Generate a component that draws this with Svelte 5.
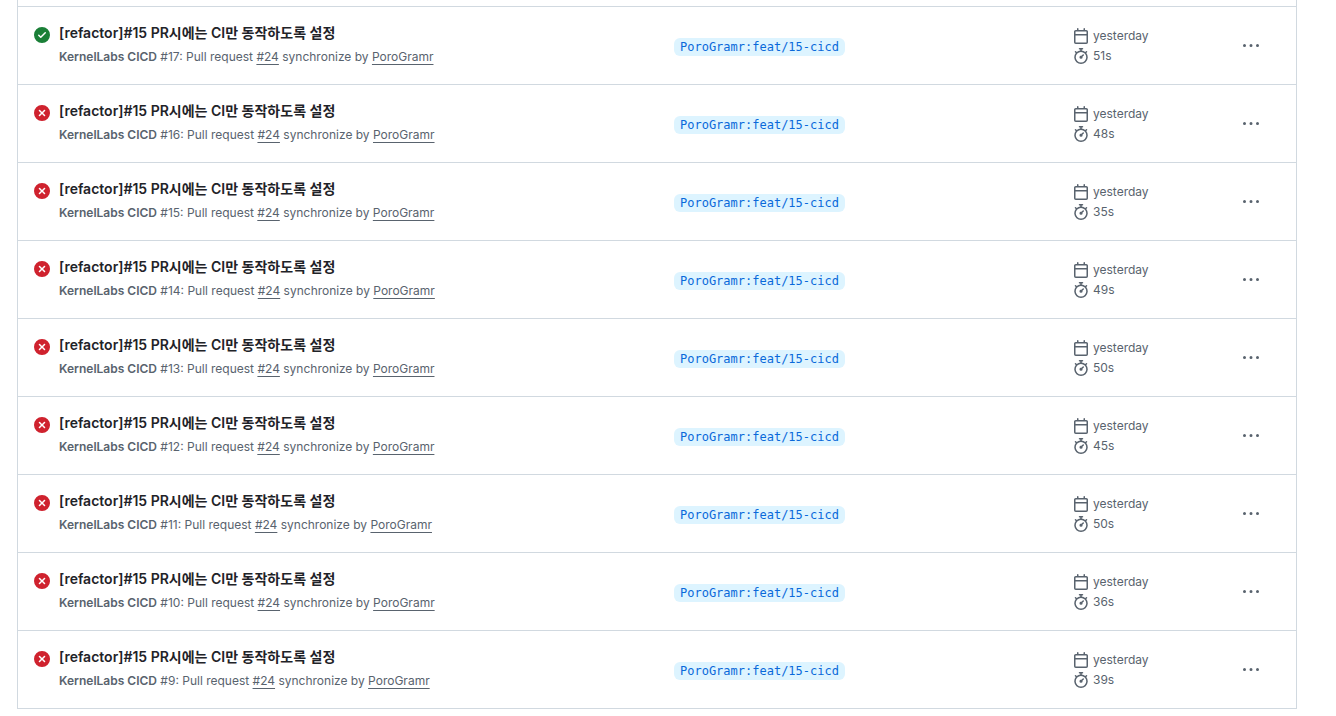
<script lang="ts">
  const runs = [
    { ok: true, num: 17, time: "51s" },
    { ok: false, num: 16, time: "48s" },
    { ok: false, num: 15, time: "35s" },
    { ok: false, num: 14, time: "49s" },
    { ok: false, num: 13, time: "50s" },
    { ok: false, num: 12, time: "45s" },
    { ok: false, num: 11, time: "50s" },
    { ok: false, num: 10, time: "36s" },
    { ok: false, num: 9, time: "39s" }
  ];
</script>

<div class="page">
  <div class="box">
    {#each runs as run}
      <div class="row">
        <div class="status">
          {#if run.ok}
            <svg width="16" height="16" viewBox="0 0 16 16" fill="#1a7f37">
              <path d="M8 16A8 8 0 1 1 8 0a8 8 0 0 1 0 16Zm3.78-9.72a.751.751 0 0 0-.018-1.042.751.751 0 0 0-1.042-.018L6.75 9.19 5.28 7.72a.751.751 0 0 0-1.042.018.751.751 0 0 0-.018 1.042l2 2a.75.75 0 0 0 1.06 0Z" />
            </svg>
          {:else}
            <svg width="16" height="16" viewBox="0 0 16 16" fill="#cf222e">
              <path d="M2.343 13.657A8 8 0 1 1 13.658 2.343 8 8 0 0 1 2.343 13.657ZM6.03 4.97a.751.751 0 0 0-1.042.018.751.751 0 0 0-.018 1.042L6.94 8 4.97 9.97a.749.749 0 0 0 .326 1.275.749.749 0 0 0 .734-.215L8 9.06l1.97 1.97a.749.749 0 0 0 1.275-.326.749.749 0 0 0-.215-.734L9.06 8l1.97-1.97a.749.749 0 0 0-.326-1.275.749.749 0 0 0-.734.215L8 6.94Z" />
            </svg>
          {/if}
        </div>
        <div class="info">
          <div class="title">[refactor]#15 PR시에는 CI만 동작하도록 설정</div>
          <div class="meta"><b>KernelLabs CICD</b> #{run.num}: Pull request <a href="#top">#24</a> synchronize by <a href="#top">PoroGramr</a></div>
        </div>
        <div class="branch"><span>PoroGramr:feat/15-cicd</span></div>
        <div class="times">
          <div class="when">
            <svg width="16" height="16" viewBox="0 0 16 16" fill="#59636e">
              <path d="M4.75 0a.75.75 0 0 1 .75.75V2h5V.75a.75.75 0 0 1 1.5 0V2h1.25c.966 0 1.75.784 1.75 1.75v10.5A1.75 1.75 0 0 1 13.25 16H2.75A1.75 1.75 0 0 1 1 14.25V3.75C1 2.784 1.784 2 2.75 2H4V.75A.75.75 0 0 1 4.75 0ZM2.5 7.5v6.75c0 .138.112.25.25.25h10.5a.25.25 0 0 0 .25-.25V7.5Zm10.75-4H2.75a.25.25 0 0 0-.25.25V6h11V3.75a.25.25 0 0 0-.25-.25Z" />
            </svg>
            yesterday
          </div>
          <div class="when">
            <svg width="16" height="16" viewBox="0 0 16 16" fill="#59636e">
              <path d="M5.75.75A.75.75 0 0 1 6.5 0h3a.75.75 0 0 1 0 1.5h-.75v1l-.001.041a6.724 6.724 0 0 1 3.464 1.435l.007-.006.75-.75a.751.751 0 0 1 1.042.018.751.751 0 0 1 .018 1.042l-.75.75-.006.007a6.75 6.75 0 1 1-10.548 0L2.72 5.03l-.75-.75a.751.751 0 0 1 .018-1.042.751.751 0 0 1 1.042-.018l.75.75.007.006A6.72 6.72 0 0 1 7.25 2.541V1.5H6.5a.75.75 0 0 1-.75-.75ZM8 14.5a5.25 5.25 0 1 0-.001-10.501A5.25 5.25 0 0 0 8 14.5Zm.389-6.7 1.33-1.33a.75.75 0 1 1 1.061 1.06L9.45 8.861A1.503 1.503 0 0 1 8 10.75a1.499 1.499 0 1 1 .389-2.95Z" />
            </svg>
            {run.time}
          </div>
        </div>
        <div class="more">
          <svg width="16" height="16" viewBox="0 0 16 16" fill="#59636e">
            <path d="M8 9a1.5 1.5 0 1 0 0-3 1.5 1.5 0 0 0 0 3ZM1.5 9a1.5 1.5 0 1 0 0-3 1.5 1.5 0 0 0 0 3Zm13 0a1.5 1.5 0 1 0 0-3 1.5 1.5 0 0 0 0 3Z" />
          </svg>
        </div>
      </div>
    {/each}
  </div>
</div>

<style>
  :global(body) {
    background: #fff;
    overflow: hidden;
  }

  .page {
    height: 716px;
    overflow: hidden;
    padding: 0 39px 0 17px;
    font-family: Inter, "Noto Sans CJK KR", sans-serif;
    color: #59636e;
  }

  .box {
    border-left: 1px solid #d1d9e0;
    border-right: 1px solid #d1d9e0;
    padding-top: 6px;
  }

  .row {
    height: 78px;
    box-sizing: border-box;
    border-top: 1px solid #d1d9e0;
    display: flex;
    align-items: center;
    padding: 0 19px 0 16px;
  }

  .row:last-child {
    border-bottom: 1px solid #d1d9e0;
    height: 79px;
  }

  .status {
    width: 25px;
    height: 16px;
    margin-top: -22px;
  }

  .info {
    width: 615px;
  }

  .title {
    font-size: 14px;
    font-weight: 600;
    line-height: 20px;
    color: #1f2328;
    margin-top: -2px;
  }

  .meta {
    font-size: 12px;
    line-height: 18px;
    margin-top: 5px;
  }

  .meta b {
    font-weight: 600;
  }

  .meta a {
    color: inherit;
    text-decoration: underline;
    text-underline-offset: 3px;
  }

  .branch {
    width: 399px;
  }

  .branch span {
    display: inline-block;
    font-family: "DejaVu Sans Mono", monospace;
    font-size: 12px;
    line-height: 18px;
    padding: 0 6px;
    border-radius: 6px;
    background: #ddf4ff;
    color: #0969da;
  }

  .times {
    width: 170px;
    font-size: 12px;
  }

  .when {
    display: flex;
    align-items: center;
    gap: 4px;
    height: 20px;
  }

  .more {
    height: 16px;
  }
</style>
